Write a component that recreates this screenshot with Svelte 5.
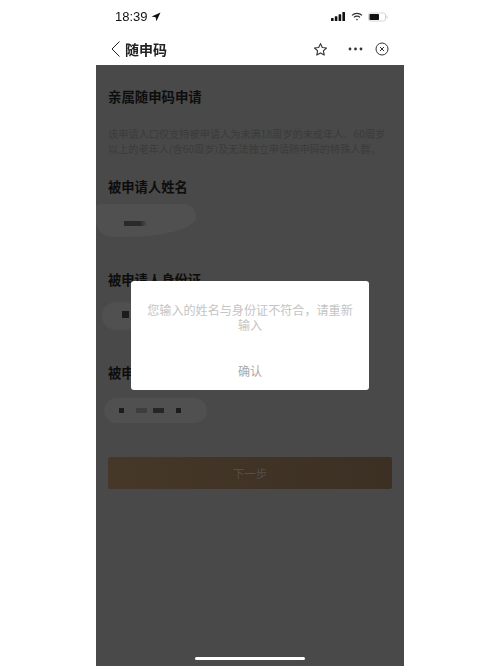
<script lang="ts">
  const fields = [
    { label: '被申请人姓名', kind: 'name' },
    { label: '被申请人身份证', kind: 'id' },
    { label: '被申请人手机号', kind: 'phone' }
  ];
</script>

<div class="screen">
  <div class="phone">
    <header class="status">
      <div class="status__time">
        <span>18:39</span>
        <svg width="10" height="10" viewBox="0 0 10 10"><path d="M9.5.5 .6 4.6l4 .7.8 4z" fill="#111" /></svg>
      </div>
      <div class="status__icons">
        <svg width="15" height="9" viewBox="0 0 15 9" fill="#111">
          <rect x="0" y="6" width="2.6" height="3" rx=".5" />
          <rect x="3.8" y="4.2" width="2.6" height="4.8" rx=".5" />
          <rect x="7.6" y="2.2" width="2.6" height="6.8" rx=".5" />
          <rect x="11.4" y="0" width="2.6" height="9" rx=".5" />
        </svg>
        <svg width="12" height="9" viewBox="0 0 12 9" fill="none" stroke="#333" stroke-width="1.3">
          <path d="M1 3.4a7 7 0 0 1 10 0" />
          <path d="M3 5.4a4.2 4.2 0 0 1 6 0" />
          <circle cx="6" cy="7.6" r=".8" fill="#333" stroke="none" />
        </svg>
        <svg width="20" height="10" viewBox="0 0 20 10">
          <rect x=".5" y="1" width="17" height="8" rx="2" fill="none" stroke="#ccc" stroke-width=".8" />
          <rect x="1.5" y="2" width="9.5" height="6" rx=".8" fill="#111" />
          <rect x="18.4" y="3.6" width="1" height="2.8" rx=".5" fill="#ccc" />
        </svg>
      </div>
    </header>

    <nav class="nav">
      <svg class="nav__back" width="11" height="18" viewBox="0 0 11 18" fill="none" stroke="#222" stroke-width="1">
        <path d="M9.5 1.5 2 9l7.5 7.5" />
      </svg>
      <span class="nav__title">随申码</span>
      <svg class="nav__star" width="15" height="15" viewBox="0 0 24 24" fill="none" stroke="#333" stroke-width="1.8" stroke-linejoin="round">
        <path d="m12 2.6 2.9 6.2 6.7.8-5 4.6 1.4 6.7-6-3.4-6 3.4 1.4-6.7-5-4.6 6.7-.8z" />
      </svg>
      <div class="capsule">
        <svg width="15" height="4" viewBox="0 0 15 4" fill="#333">
          <circle cx="2" cy="2" r="1.4" />
          <circle cx="7.5" cy="2" r="1.4" />
          <circle cx="13" cy="2" r="1.4" />
        </svg>
        <svg width="14" height="14" viewBox="0 0 14 14" fill="none" stroke="#333" stroke-width="1">
          <circle cx="7" cy="7" r="6" />
          <path d="m5 5 4 4M9 5l-4 4" />
        </svg>
      </div>
    </nav>

    <main class="page">
      <h1>亲属随申码申请</h1>
      <p class="desc">
        该申请人口仅支持被申请人为未满18周岁的未成年人、60周岁以上的老年人(含60周岁)及无法独立申请随申码的特殊人群。
      </p>

      {#each fields as field}
        <section class="field">
          <h2>{field.label}</h2>
          <div class="scribble scribble--{field.kind}">
            {#if field.kind === 'name'}
              <i class="mark mark--long"></i>
            {:else if field.kind === 'id'}
              <i class="mark mark--square"></i>
            {:else}
              <i class="mark"></i>
              <i class="mark mark--light"></i>
              <i class="mark mark--wide"></i>
              <i class="mark"></i>
            {/if}
          </div>
        </section>
      {/each}

      <button type="button" class="next">下一步</button>
    </main>

    <div class="dialog">
      <p>您输入的姓名与身份证不符合，请重新输入</p>
      <button type="button">确认</button>
    </div>

    <div class="home"></div>
  </div>
</div>

<style>
  :global(body) {
    margin: 0;
    background: #fff;
  }

  .screen {
    width: 500px;
    height: 666px;
    padding-left: 96px;
    box-sizing: border-box;
    overflow: hidden;
    font-family: 'Noto Sans CJK SC', 'Liberation Sans', sans-serif;
    filter: blur(0.45px);
  }

  .phone {
    position: relative;
    display: flex;
    flex-direction: column;
    width: 308px;
    height: 666px;
  }

  .status {
    display: flex;
    align-items: center;
    justify-content: space-between;
    height: 33px;
    padding: 0 16px 0 19px;
    box-sizing: border-box;
    flex: none;
  }

  .status__time {
    display: flex;
    align-items: center;
    gap: 3px;
    font-family: 'Liberation Sans', sans-serif;
    font-size: 13px;
    color: #111;
  }

  .status__icons {
    display: flex;
    align-items: center;
    gap: 5px;
  }

  .nav {
    display: flex;
    align-items: center;
    height: 32px;
    padding: 0 12px 0 14px;
    box-sizing: border-box;
    flex: none;
  }

  .nav__title {
    margin-left: 4px;
    font-size: 14px;
    font-weight: 700;
    color: #222;
  }

  .nav__star {
    margin-left: auto;
    margin-right: 9px;
  }

  .capsule {
    display: flex;
    align-items: center;
    gap: 12px;
    padding: 3px 3px 3px 11px;
    border-radius: 12px;
  }

  .page {
    flex: 1;
    display: flex;
    flex-direction: column;
    padding: 22px 12px 0;
    background: #494949;
    color: #0d0d0d;
  }

  h1 {
    margin: 0;
    font-size: 13.4px;
    line-height: 18px;
    font-weight: 700;
  }

  .desc {
    margin: 21px 0 0;
    font-size: 10.2px;
    line-height: 15px;
    color: #3b3b3b;
  }

  .field {
    height: 93px;
    flex: none;
  }

  .field:first-of-type {
    margin-top: 22px;
  }

  h2 {
    margin: 0;
    font-size: 13.3px;
    line-height: 18px;
    font-weight: 700;
  }

  .scribble {
    display: flex;
    align-items: center;
    gap: 7px;
    background: #505050;
  }

  .scribble--name {
    width: 100px;
    height: 33px;
    margin: 8px 0 0 -12px;
    padding-left: 28px;
    padding-top: 6px;
    box-sizing: border-box;
    border-radius: 4px 12px 70px 16px / 4px 12px 20px 16px;
  }

  .scribble--id {
    width: 36px;
    height: 28px;
    margin: 13px 0 0 -6px;
    padding-left: 20px;
    padding-bottom: 4px;
    box-sizing: border-box;
    border-radius: 14px;
  }

  .scribble--phone {
    width: 103px;
    height: 25px;
    margin: 16px 0 0 -4px;
    padding-left: 15px;
    box-sizing: border-box;
    border-radius: 13px;
  }

  .mark {
    display: block;
    width: 5px;
    height: 5px;
    background: #1c1c1c;
  }

  .mark--long {
    width: 23px;
    background: linear-gradient(90deg, #2a2a2a 70%, #505050);
  }

  .mark--square {
    width: 7px;
    height: 7px;
  }

  .mark--light {
    width: 11px;
    margin-left: 5px;
    margin-right: -1px;
    background: #3e3e3e;
  }

  .mark--wide {
    width: 11px;
    margin-right: 5px;
    background: #262626;
  }

  .next {
    width: 284px;
    height: 32px;
    padding: 0;
    border: 0;
    border-radius: 2px;
    background: linear-gradient(90deg, #453828, #3c3024);
    color: #544f47;
    font-family: inherit;
    font-size: 11.5px;
  }

  .dialog {
    position: absolute;
    left: 35px;
    top: 281px;
    width: 238px;
    height: 109px;
    display: flex;
    flex-direction: column;
    align-items: center;
    box-sizing: border-box;
    padding: 21px 16px 0;
    background: #fff;
    border-radius: 3px;
  }

  .dialog p {
    margin: 0;
    font-size: 12.1px;
    line-height: 15px;
    text-align: center;
    color: #c4c4c4;
  }

  .dialog button {
    margin-top: 30px;
    padding: 0;
    border: 0;
    background: none;
    font-family: inherit;
    font-size: 12px;
    line-height: 18px;
    color: #a8a8a8;
  }

  .home {
    position: absolute;
    left: 99px;
    bottom: 6px;
    width: 110px;
    height: 3px;
    border-radius: 2px;
    background: #fff;
  }
</style>
